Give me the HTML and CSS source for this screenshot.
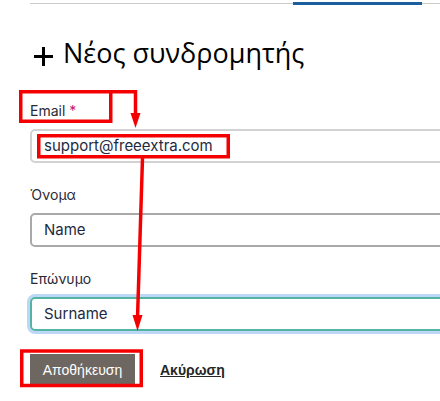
FILE: index.html
```html
<!DOCTYPE html>
<html lang="el">
<head>
<meta charset="utf-8">
<link rel="stylesheet" href="styles.css">
</head>
<body>
<div class="page">
  <div class="tabs"><div class="tab-active"></div></div>
  <h1 class="title"><svg class="plus" width="19" height="19" viewBox="0 0 19 19"><path d="M9.5 0V19M0 9.5H19" stroke="#000" stroke-width="3" fill="none"/></svg> Νέος συνδρομητής</h1>
  <form class="form">
    <div class="field">
      <label class="label">Email <span class="req">*</span></label>
      <div class="input input-email">support@freeextra.com</div>
    </div>
    <div class="field">
      <label class="label">Όνομα</label>
      <div class="input input-name">Name</div>
    </div>
    <div class="field">
      <label class="label">Επώνυμο</label>
      <div class="input input-focus">Surname</div>
    </div>
    <div class="actions">
      <button type="button" class="btn-save">Αποθήκευση</button>
      <a class="cancel" href="#">Ακύρωση</a>
    </div>
  </form>
  <svg class="annot" width="440" height="401" viewBox="0 0 440 401">
    <g fill="none" stroke="#f50000" stroke-width="3.5">
      <rect x="20.75" y="91.75" width="90" height="29.5"/>
      <polyline points="111,91.75 135.5,91.75 135.5,116"/>
      <rect x="38.75" y="135.75" width="189.5" height="21"/>
      <line x1="142.5" y1="158" x2="137.5" y2="318"/>
      <rect x="21.75" y="351" width="119.5" height="34.5"/>
    </g>
    <g fill="#f50000">
      <polygon points="130.5,113 140.5,113 135.5,128"/>
      <polygon points="132.5,315 142.5,315 137.5,331"/>
    </g>
  </svg>
</div>
</body>
</html>
```
FILE: styles.css
```css
html, body {
  margin: 0;
  padding: 0;
  background: #fff;
}
body {
  overflow: hidden;
  width: 440px;
  height: 401px;
}
.page {
  position: relative;
  width: 440px;
  height: 401px;
  overflow: hidden;
}
.tabs {
  margin-left: 30px;
  height: 3px;
  border-bottom: 1px solid #cccccc;
  display: flex;
  justify-content: flex-end;
  padding-right: 18px;
}
.tab-active {
  align-self: flex-end;
  width: 129px;
  height: 3px;
  margin-bottom: -2px;
  background: #1b5f9e;
}
.title {
  margin: 29px 0 0 34px;
  font-family: "Open Sans", "Noto Sans", sans-serif;
  font-weight: 400;
  font-size: 27px;
  line-height: 40px;
  height: 40px;
  color: #000;
  white-space: nowrap;
}
.plus {
  vertical-align: -3px;
  margin-right: 3px;
}
.form {
  margin: 28px 0 0 30px;
}
.field {
  margin-bottom: 22px;
}
.label {
  display: block;
  font-family: "Inter", sans-serif;
  font-size: 14px;
  line-height: 20px;
  color: #2a2a36;
  margin-bottom: 8px;
}
.req {
  color: #c0157a;
}
.input {
  box-sizing: border-box;
  width: 480px;
  height: 34px;
  border: 2px solid #a9a9a9;
  border-radius: 5px;
  padding: 0 12px;
  font-family: "Inter", sans-serif;
  font-size: 15px;
  line-height: 30px;
  color: #1e2a40;
}
.input-email {
  border-color: #d2d2d2;
}
.input-focus {
  border-color: #53b4a3;
  box-shadow: 0 0 0 3px #bdd7f7;
}
.actions {
  display: flex;
  align-items: center;
  gap: 25px;
  margin-top: 23px;
}
.btn-save {
  width: 105px;
  height: 32px;
  border: none;
  background: #6e6761;
  color: #fff;
  font-family: "Liberation Sans", Arial, sans-serif;
  font-size: 14px;
  padding: 0;
}
.cancel {
  font-family: "Liberation Sans", Arial, sans-serif;
  font-size: 14px;
  font-weight: 700;
  color: #262626;
  text-decoration: underline;
}
.annot {
  position: absolute;
  left: 0;
  top: 0;
  pointer-events: none;
}
```
